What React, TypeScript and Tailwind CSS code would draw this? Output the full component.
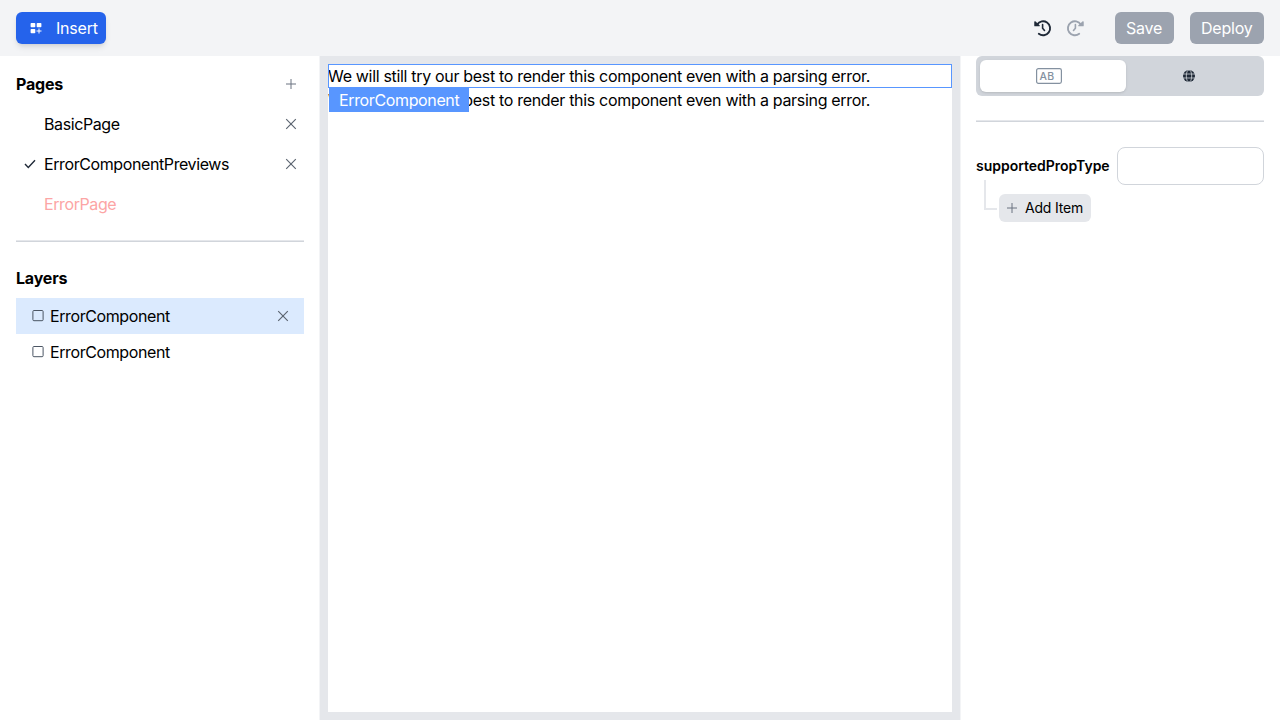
import React from "react";

function Cross({ className = "" }: { className?: string }) {
  return (
    <svg className={className} width="12" height="12" viewBox="0 0 12 12" fill="none" stroke="#5b6470" strokeWidth="1.15">
      <path d="M1.2 1.2l9.6 9.6M10.8 1.2L1.2 10.8" />
    </svg>
  );
}

function Plus() {
  return (
    <svg width="10" height="10" viewBox="0 0 10 10" fill="none" stroke="#6b7280" strokeWidth="1">
      <path d="M5 0v10M0 5h10" />
    </svg>
  );
}

function InsertIcon() {
  return (
    <svg width="12" height="12" viewBox="0 0 12 12" fill="#fff">
      <rect x="0.6" y="0.9" width="4.7" height="4.3" rx="0.8" />
      <rect x="6.7" y="0.9" width="4.7" height="4.3" rx="0.8" />
      <rect x="0.6" y="6.9" width="4.7" height="4.3" rx="0.8" />
      <path d="M8.5 6.5h1v2h2v1h-2v2h-1v-2h-2v-1h2z" />
    </svg>
  );
}

function HistoryIcon({ className = "" }: { className?: string }) {
  return (
    <svg className={className} width="18" height="18" viewBox="0 0 18 18" fill="none" stroke="currentColor" strokeWidth="1.9" strokeLinecap="round" strokeLinejoin="round">
      <path d="M3.2 5.5A7 7 0 1 1 4.8 14.8" />
      <path d="M0.9 2.8v3.9h4.3z" fill="currentColor" strokeWidth="1.2" />
      <path d="M8.6 5.6v3.6l1.9 2.3" strokeWidth="1.6" />
    </svg>
  );
}

function GlobeIcon() {
  return (
    <svg width="12" height="12" viewBox="0 0 12 12">
      <circle cx="6" cy="6" r="6" fill="#1f2937" />
      <g fill="none" stroke="#d1d5db" strokeWidth="0.8">
        <ellipse cx="6" cy="6" rx="2.7" ry="6.2" />
        <path d="M0 4h12M0 8h12" />
      </g>
    </svg>
  );
}

function Divider() {
  return <div className="h-0.5 border-t border-b border-t-[#e5e7eb] border-b-[#d1d5db]" />;
}

function PageRow({ name, active, error }: { name: string; active?: boolean; error?: boolean }) {
  return (
    <li className="flex h-10 items-center pr-[7px]">
      <span className="flex w-7 justify-center">
        {active && (
          <svg width="12" height="10" viewBox="0 0 12 10" fill="none" stroke="#1f2937" strokeWidth="1.4">
            <path d="M1 5l3.3 3.4L11 1.3" />
          </svg>
        )}
      </span>
      <span className={error ? "grow text-[#fca5a5]" : "grow"}>{name}</span>
      {!error && <Cross />}
    </li>
  );
}

function LayerRow({ active }: { active?: boolean }) {
  return (
    <li className={active ? "flex h-9 items-center bg-[#dbeafe] pr-[15px] pl-4" : "flex h-9 items-center pr-[15px] pl-4"}>
      <svg className="mr-1.5" width="12" height="12" viewBox="0 0 12 12" fill="none" stroke="#4b5563">
        <rect x="0.9" y="0.5" width="10.2" height="10.2" rx="1" />
      </svg>
      <span className="grow">ErrorComponent</span>
      {active && <Cross />}
    </li>
  );
}

export default function App() {
  return (
    <div className="flex h-screen flex-col overflow-hidden bg-white font-['Inter',sans-serif] text-base tracking-[-0.32px] text-black">
      <header className="flex h-14 shrink-0 items-center justify-between bg-[#f3f4f6] px-4 tracking-[-0.2px]">
        <button className="flex h-8 w-[89.5px] items-center rounded-md bg-[#2563eb] pl-3.5 text-white shadow-md">
          <InsertIcon />
          <span className="ml-3.5">Insert</span>
        </button>
        <div className="flex items-center">
          <HistoryIcon className="text-[#1f2937]" />
          <HistoryIcon className="mr-[31px] ml-3.5 -scale-x-100 text-[#9ca3af]" />
          <button className="mr-4 h-8 w-[59px] rounded-md bg-[#9ca3af] text-white">Save</button>
          <button className="h-8 w-[74.5px] rounded-md bg-[#9ca3af] text-white">Deploy</button>
        </div>
      </header>
      <div className="flex min-h-0 grow">
        <aside className="w-80 shrink-0 border-r border-[#f3f4f6] pt-2 pr-[15px] pl-4 tracking-[-0.4px]">
          <div className="flex h-10 items-center justify-between pr-2">
            <h2 className="font-bold tracking-[-0.2px]">Pages</h2>
            <Plus />
          </div>
          <ul className="mb-4">
            <PageRow name="BasicPage" />
            <PageRow name="ErrorComponentPreviews" active />
            <PageRow name="ErrorPage" error />
          </ul>
          <Divider />
          <h2 className="mt-6 mb-2 font-bold tracking-[-0.2px]">Layers</h2>
          <ul>
            <LayerRow active />
            <LayerRow />
          </ul>
        </aside>
        <main className="w-[640px] shrink-0 bg-[#e5e7eb] p-2">
          <div className="h-full bg-white">
            <div className="relative h-6 whitespace-nowrap outline outline-1 -outline-offset-1 outline-[#5896ff]">
              We will still try our best to render this component even with a parsing error.
              <div className="absolute top-[23px] left-px z-10 flex h-[25px] w-[140.4px] items-center justify-center bg-[#5896ff] tracking-[-0.37px] text-white">
                ErrorComponent
              </div>
            </div>
            <div className="h-6 whitespace-nowrap">
              We will still try our best to render this component even with a parsing error.
            </div>
          </div>
        </main>
        <aside className="w-80 shrink-0 border-l border-[#f3f4f6] pr-4 pl-[15px]">
          <div className="mb-6 flex h-10 rounded-md bg-[#d1d5db] p-1">
            <div className="flex w-[146px] items-center justify-center rounded-md bg-white pr-2 shadow">
              <svg width="26" height="16" viewBox="0 0 26 16" fill="none">
                <rect x="0.6" y="0.6" width="24.8" height="14.8" rx="1.8" stroke="#8491a0" strokeWidth="1.2" />
                <text x="3.4" y="11.9" fill="#8491a0" fontSize="10.5" fontFamily="Inter" fontWeight="500" letterSpacing="0.3">AB</text>
              </svg>
            </div>
            <div className="flex grow items-center justify-center pr-2">
              <GlobeIcon />
            </div>
          </div>
          <Divider />
          <div className="mt-[25px] flex h-[38px] items-center">
            <label className="w-[141.4px] shrink-0 text-sm font-semibold tracking-[-0.02px]">supportedPropType</label>
            <input className="h-full min-w-0 grow rounded-lg border border-[#d1d5db] bg-white px-2" />
          </div>
          <div className="-mt-[5px] flex pl-2">
            <div className="h-[30px] w-[13px] border-b-2 border-l-2 border-[#e5e7eb]" />
            <button className="mt-3.5 ml-0.5 flex h-7 w-[92px] items-center rounded-md bg-[#e5e7eb] pl-2 text-sm tracking-[-0.2px]">
              <Plus />
              <span className="ml-2">Add Item</span>
            </button>
          </div>
        </aside>
      </div>
    </div>
  );
}
